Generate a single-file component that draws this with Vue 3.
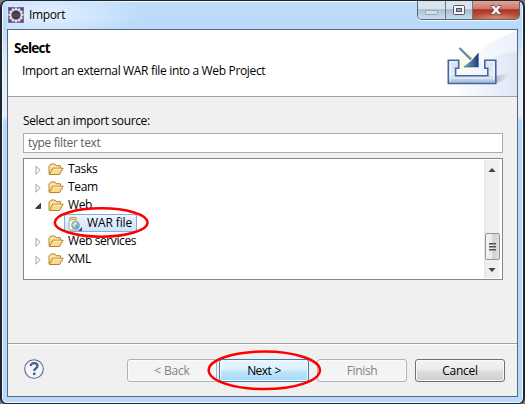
<script setup>
const rows = [
  { label: 'Tasks', cls: 't-tasks' },
  { label: 'Team', cls: 't-team' },
  { label: 'Web', open: true, cls: 't-web' },
  { label: 'WAR file', leaf: true, cls: 't-war' },
  { label: 'Web services', cls: 't-services' },
  { label: 'XML', cls: 't-xml' }
]
const teeth = Array.from({ length: 12 }, (_, i) => i * 30)
</script>

<template>
  <div class="window">
    <div class="titlebar">
      <svg class="app-icon" width="16" height="16" viewBox="0 0 16 16">
        <rect width="16" height="16" fill="#5a4480" />
        <rect x=".5" y=".5" width="15" height="15" fill="none" stroke="#7a6b98" />
        <rect v-for="a in teeth" :key="a" x="6.9" y=".5" width="2.2" height="3" fill="#e4e2e2" :transform="`rotate(${a} 8 8)`" />
        <circle cx="8" cy="8" r="5.5" fill="#393650" stroke="#d8d8d4" stroke-width="1.8" />
        <path d="M4 7h8M4 9h8" stroke="#5c5872" />
      </svg>
      <span class="title">Import</span>
      <div class="controls">
        <div class="ctl min"><svg width="13" height="6"><rect x=".5" y=".5" width="12" height="4" rx=".5" fill="#d4dee8" stroke="#9baaba" /></svg></div>
        <div class="ctl max"><svg width="12" height="10"><rect x=".5" y=".5" width="11" height="9" rx="1" fill="#f6f6f6" stroke="#535666" /><rect x="3.5" y="3.5" width="5" height="3" fill="#8ba5c0" stroke="#535666" /></svg></div>
        <div class="ctl close"><svg width="12" height="10" viewBox="0 0 12 10"><path d="M1 .5h3.2L6 2.7 7.8.5H11v1L8.2 5l2.8 3.5v1H7.8L6 7.3 4.2 9.5H1v-1L3.8 5 1 1.5z" fill="#f7f7f7" stroke="#55525e" stroke-width=".9" /></svg></div>
      </div>
    </div>

    <div class="client">
      <header class="banner">
        <div class="banner-text">
          <h1><span>Select</span></h1>
          <p><span>Import an external WAR file into a Web Project</span></p>
        </div>
        <svg class="banner-art" width="125" height="66" viewBox="0 0 125 66">
          <defs>
            <linearGradient id="sweep" x1="0" y1="0" x2="1" y2="0">
              <stop offset="0" stop-color="#fff" /><stop offset=".6" stop-color="#f4f6fd" /><stop offset="1" stop-color="#edf1fb" />
            </linearGradient>
            <linearGradient id="sweep2" x1="0" y1="0" x2="1" y2="0">
              <stop offset="0" stop-color="#fff" stop-opacity="0" /><stop offset="1" stop-color="#dbe2f4" />
            </linearGradient>
            <linearGradient id="tray" x1="0" y1="0" x2="0" y2="1">
              <stop offset="0" stop-color="#d3dff0" /><stop offset=".6" stop-color="#e3ecf7" /><stop offset="1" stop-color="#9db8da" />
            </linearGradient>
            <linearGradient id="arrow" x1="0" y1="0" x2="1" y2="0">
              <stop offset="0" stop-color="#7ca9d4" /><stop offset="1" stop-color="#183e77" />
            </linearGradient>
            <linearGradient id="shade" x1="0" y1="0" x2="1" y2="0">
              <stop offset="0" stop-color="#b3aac4" /><stop offset="1" stop-color="#ddd9ea" stop-opacity="0" />
            </linearGradient>
          </defs>
          <path d="M125 1C90 12 70 33 58 66h67z" fill="url(#sweep)" />
          <path d="M125 21C93 27 65 38 43 66h82z" fill="url(#sweep2)" opacity=".8" />
          <path d="M104 46l17-4-11 9-8 3z" fill="url(#shade)" />
          <circle cx="76" cy="32" r="10" fill="#fbfbdc" opacity=".7" />
          <path d="M56.3 30.2H66.7V38.2H63.6V45.8H95.8V38.2H92.8V30.2H103.8V53.5H56.3z" fill="url(#tray)" stroke="#42689f" stroke-width="1.6" />
          <path d="M58 32h7M95 32h7M58.3 32v19.5M60 48.2h40M101.7 32v18" stroke="#fafdff" fill="none" opacity=".8" />
          <path d="M67.5 18L79 29.5" stroke="#6788b0" stroke-width="2.4" />
          <path d="M86.4 23V37H72L79.5 31z" fill="url(#arrow)" stroke="#315f93" stroke-width=".6" />
        </svg>
      </header>

      <main class="content">
        <label class="source"><span>Select an import source:</span></label>
        <div class="filter"><span>type filter text</span></div>
        <div class="tree">
          <div class="rows">
            <div v-for="r in rows" :key="r.label" class="row" :class="{ leaf: r.leaf }">
              <svg v-if="!r.leaf" class="twisty" width="9" height="10">
                <path v-if="r.open" d="M6.5 2.4V7.4H1.6z" fill="#404040" stroke="#222" stroke-width=".8" />
                <path v-else d="M2 1.3L6.2 5.2 2 9.2z" fill="#fff" stroke="#a5a5a5" />
              </svg>
              <svg v-if="!r.leaf" class="folder" width="16" height="13" viewBox="0 0 16 13">
                <path d="M1 11V3.2Q1 2.4 2 2.4L3 1h4l1 1.7h4.4V5" fill="#f9e5a5" stroke="#bd852f" />
                <path d="M1.4 11.5L4.5 5.2H15.2L11.5 11.5z" fill="#fbd98c" stroke="#b77f32" />
                <path d="M5 6.2h8.3" stroke="#fff1bd" />
              </svg>
              <div class="item" :class="{ selected: r.leaf }">
                <svg v-if="r.leaf" width="16" height="16" viewBox="0 0 16 16">
                  <path d="M3.5 3.5L2 6v6.5Q2 14 4 14h6V6L8.5 3.5z" fill="#fffdf2" stroke="#a8a595" />
                  <rect x="2.5" y="1.4" width="7" height="2.4" rx="1" fill="#f0d492" stroke="#b78b39" stroke-width=".8" />
                  <circle cx="8.5" cy="9.2" r="3.9" fill="#8eb8d8" stroke="#6e96bd" stroke-width=".8" />
                  <path d="M7 6.4l2-1 1.2 2-1.4 1-1.3 2.5-2-2.1z" fill="#d8e8ba" /><path d="M9 10l2-.7-.5 2-1.6.8z" fill="#5ba36c" />
                  <path d="M15 11v4h-4z" fill="#234f83" />
                </svg>
                <span :class="r.cls">{{ r.label }}</span>
              </div>
            </div>
          </div>
          <div class="scrollbar">
            <svg class="up" width="8" height="5"><path d="M4 0l3.7 4H.3z" fill="#444" /></svg>
            <div class="thumb"><i></i><i></i><i></i></div>
            <svg class="down" width="8" height="5"><path d="M.3 0h7.4L4 4z" fill="#444" /></svg>
          </div>
        </div>
      </main>

      <footer class="footer">
        <svg class="help" width="20" height="20" viewBox="0 0 20 20">
          <circle cx="10" cy="10" r="9.3" fill="#f4f6f9" stroke="#596b8a" stroke-width="1.1" />
          <path d="M6.7 7.1C6.7 3.1 13.5 3.4 13.5 6.9C13.5 9.5 10.2 9 10.2 12" fill="none" stroke="#4b6087" stroke-width="2.3" />
          <rect x="9" y="13.6" width="2.5" height="2.5" fill="#4b6087" />
        </svg>
        <button class="btn disabled"><span class="t-back">&lt; Back</span></button>
        <button class="btn primary"><span class="t-next">Next &gt;</span></button>
        <button class="btn disabled finish"><span class="t-finish">Finish</span></button>
        <button class="btn cancel"><span class="t-cancel">Cancel</span></button>
      </footer>
    </div>

    <svg class="marks" width="525" height="404">
      <ellipse cx="101.2" cy="222.5" rx="46.4" ry="14.2" />
      <ellipse cx="264.3" cy="370.3" rx="55.6" ry="18.8" />
    </svg>
  </div>
</template>

<style>
body { background: #77797c; overflow: hidden; }
</style>

<style scoped>
* { box-sizing: border-box; }
.window {
  position: relative; width: 525px; height: 404px; padding: 0 6px 6px 5px;
  border: solid #20262e; border-width: 1px 2px; border-bottom-width: 1px; border-radius: 7px 7px 6px 6px;
  background: linear-gradient(180deg, #c0ddf9 0, #b9dafb 28px, #dbeafa 60px, #e5effa 115px, #b9d9fa 121px, #b9d9fa);
  box-shadow: inset 0 0 0 1px #eff8ff; overflow: hidden;
  font: 12px/18px "Open Sans", "Noto Sans", sans-serif; color: #000;
}
span { white-space: nowrap; }
.titlebar { display: flex; height: 28px; padding-left: 1px; margin: 0 -3px 0 0;
  background: radial-gradient(ellipse 95px 26px at 40px 13px, #e4f1ff 0, #d2e7fe 45%, transparent 100%); }
.app-icon { margin-top: 6px; }
.title { margin: 5px 0 0 5px; font-size: 12px; letter-spacing: -.35px; }
.controls { display: flex; width: 103px; height: 19px; margin-left: auto; border: 1px solid #53677b; border-top: 0; border-radius: 0 0 5px 5px; overflow: hidden; box-shadow: 0 1px 0 #edf7ff; }
.ctl { display: flex; justify-content: center; align-items: center; }
.min { width: 28px; border-right: 1px solid #65798c; background: linear-gradient(#d9e3ec 0 42%, #b1c0cf 48%, #c9deef); padding-top: 5px; }
.max { width: 27px; border-right: 1px solid #65798c; background: linear-gradient(#d9e3ec 0 42%, #a9bacb 48%, #c5def0); }
.close { flex: 1; background: radial-gradient(ellipse 24px 7px at 50% 100%, #dd8a66, transparent), linear-gradient(#e3a597, #cf7868 43%, #b23225 48%, #c55a45); }
.client { display: flex; flex-direction: column; width: 511px; height: 368px; border: 1px solid #596979; background: #f0f0f0; }
.banner { display: flex; justify-content: space-between; height: 67px; border-bottom: 1px solid #a0a0a0; background: #fff; }
.banner-text { padding: 8px 0 0 6px; }
h1 { margin: 0; font-size: 13.5px; line-height: 20px; font-weight: 700; letter-spacing: -.75px; }
p { margin: 4px 0 0 8px; letter-spacing: -.34px; }
.banner-art { flex: none; }
.content { height: 246px; padding: 15px 14px 0 15px; }
.source { display: block; height: 21px; letter-spacing: -.35px; }
.filter { height: 20px; border: 1px solid #abadb3; background: #fff; padding: 0 4px; color: #606060; letter-spacing: -.36px; }
.tree { display: flex; justify-content: space-between; margin-top: 5px; height: 122px; padding: 1px 2px 1px 1px; border: 1px solid #828790; background: #fff; }
.rows { padding: 0 0 0 9px; }
.row { display: flex; align-items: center; height: 18px; }
.twisty { margin: 2px 5px 0 0; }
.folder { margin: 1px 0 0 0; }
.item { display: flex; align-items: center; height: 18px; padding-left: 4px; letter-spacing: -.35px; }
.leaf { padding-left: 30px; }
.selected { width: 73px; gap: 4px; border: 1px solid #84acdd; border-radius: 2px; padding-left: 2px; background: linear-gradient(#eef5fd, #cfe3fa); }
.selected svg { margin-top: 1px; flex: none; }
.t-war { letter-spacing: -.12px; }
.t-services { letter-spacing: -.4px; }
.scrollbar { display: flex; flex-direction: column; align-items: center; width: 16px; background: linear-gradient(90deg, #e6e6e6, #f0f0f0 25%, #eee 85%, #f8f8f8); }
.up { margin-top: 8px; }
.thumb { display: flex; flex-direction: column; align-items: center; justify-content: center; gap: 1px; width: 15px; height: 27px; margin-top: 60px; border: 1px solid #949494; border-radius: 2px; background: linear-gradient(90deg, #f5f5f5, #e8e8e8 48%, #cfcfcf 52%, #dedede); }
.thumb i { width: 7px; height: 2px; background: linear-gradient(#555 50%, #999 50%); }
.down { margin-top: 8px; }
.footer { display: flex; height: 53px; padding: 15px 11px 0 16px; border-top: 1px solid #a0a0a0; box-shadow: inset 0 1px #fff; }
.help { margin: 0 83px 0 0; }
.btn { width: 90px; height: 23px; margin: 0 2px 0 0; padding: 0 0 1px; flex: none; border: 1px solid #707070; border-radius: 3px; font: inherit; color: #000; background: linear-gradient(#f2f2f2, #ebebeb 48%, #ddd 52%, #cfcfcf); box-shadow: inset 0 0 0 1px #fafafa; line-height: 19px; letter-spacing: -.2px; }
.disabled { border-color: #adb2b5; color: #838383; background: #f4f4f4; }
.primary { border-color: #3c7fb1; background: linear-gradient(#eaf6fd, #d9f0fc 48%, #bee6fd 52%, #a7d9f5); margin-right: 8px; }
.t-next { letter-spacing: -.6px; word-spacing: 1px; }
.finish { margin-right: 8px; letter-spacing: -.35px; }
.cancel { margin-right: 0; letter-spacing: -.3px; }
.marks { position: absolute; left: -2px; top: -1px; pointer-events: none; }
.marks ellipse { fill: none; stroke: #fa0000; stroke-width: 2.5; }
</style>
